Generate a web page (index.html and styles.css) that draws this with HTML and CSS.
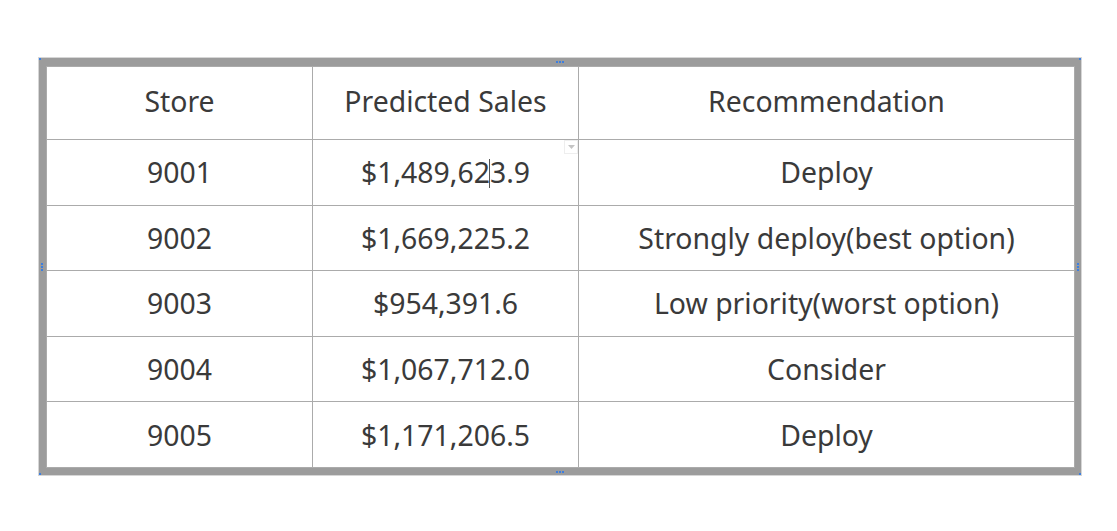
FILE: index.html
```html
<!DOCTYPE html>
<html>
<head>
<meta charset="utf-8">
<link rel="stylesheet" href="styles.css">
</head>
<body>
<div class="frame">
  <span class="handle h-tl"></span><span class="handle h-tr"></span>
  <span class="handle h-bl"></span><span class="handle h-br"></span>
  <span class="dots dots-top"><i></i><i></i><i></i></span>
  <span class="dots dots-bottom"><i></i><i></i><i></i></span>
  <span class="dots vdots dots-left"><i></i><i></i><i></i></span>
  <span class="dots vdots dots-right"><i></i><i></i><i></i></span>
  <table class="grid">
    <colgroup><col class="c1"><col class="c2"><col class="c3"></colgroup>
    <thead>
      <tr class="head"><th>Store</th><th>Predicted Sales</th><th>Recommendation</th></tr>
    </thead>
    <tbody>
      <tr><td>9001</td><td class="active">$1,489,62<span class="caret"></span>3.9<span class="drop"><svg width="9" height="6" viewBox="0 0 9 6"><path d="M1 1h7L4.5 5z" fill="#c4c4c4"/></svg></span></td><td>Deploy</td></tr>
      <tr><td>9002</td><td>$1,669,225.2</td><td>Strongly deploy(best option)</td></tr>
      <tr><td>9003</td><td>$954,391.6</td><td>Low priority(worst option)</td></tr>
      <tr><td>9004</td><td>$1,067,712.0</td><td>Consider</td></tr>
      <tr><td>9005</td><td>$1,171,206.5</td><td>Deploy</td></tr>
    </tbody>
  </table>
</div>
</body>
</html>
```
FILE: styles.css
```css
html, body { margin: 0; padding: 0; background: #fff; }
body { font-family: "Noto Sans", "Open Sans", sans-serif; color: #3a3a3a; }
.frame {
  position: relative;
  margin: 57px 0 0 38px;
  width: 1028px;
  padding: 8px 7px 7px 7px;
  background: #9c9c9c;
  border: 1px solid #d6d6d6;
}
.grid {
  width: 1028px;
  border-collapse: collapse;
  table-layout: fixed;
  background: #fff;
}
.c1, .c2 { width: 266px; }
.c3 { width: 496px; }
.grid th, .grid td {
  border: 1px solid #ababab;
  text-align: center;
  font-weight: 400;
  font-size: 28.4px;
  padding: 0;
  height: 64.6px;
}
.grid .head th { height: 68px; padding-bottom: 4px; }
.active { position: relative; }
.caret {
  display: inline-block;
  width: 1px;
  height: 29px;
  background: #555;
  vertical-align: -5px;
  margin: 0 -0.5px;
}
.drop {
  position: absolute;
  right: 0;
  top: 0;
  width: 12px;
  height: 12px;
  border: 1px solid #eee;
  background: #fff;
  display: flex;
  align-items: center;
  justify-content: center;
}
.handle {
  position: absolute;
  width: 2px;
  height: 2px;
  background: #3d7fe0;
}
.h-tl { left: 0; top: 0; }
.h-tr { right: 0; top: 0; }
.h-bl { left: 0; bottom: 0; }
.h-br { right: 0; bottom: 0; }
.dots {
  position: absolute;
  display: flex;
  gap: 1px;
}
.dots i { display: block; width: 2px; height: 2px; background: #3d7fe0; }
.dots-top { top: 3px; left: 517px; }
.dots-bottom { bottom: 2px; left: 517px; }
.vdots { flex-direction: column; }
.dots-left { left: 2px; top: 205px; }
.dots-right { right: 2px; top: 205px; }
```
